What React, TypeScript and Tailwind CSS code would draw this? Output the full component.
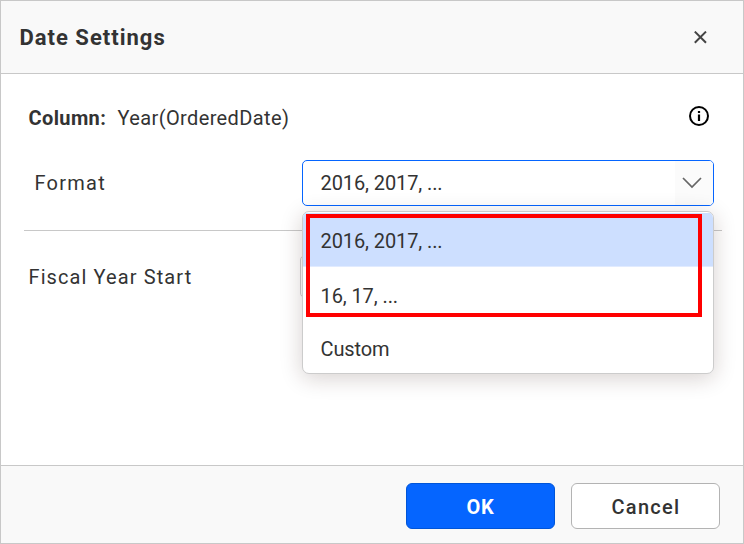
import React from "react";

const options = [
  { label: "2016, 2017, ...", style: "mt-px h-[54px] border-b border-[#e1ebff] bg-[#cddfff] pt-[2px]" },
  { label: "16, 17, ...", style: "h-[54px] pt-[4px]" },
  { label: "Custom", style: "h-[52px] pt-[4px]" },
];

export default function App() {
  return (
    <div className="flex h-[544px] w-[744px] flex-col overflow-hidden border border-[#c8c8c8] bg-white font-['Roboto',sans-serif] text-xl text-[#333]">
      <header className="flex h-[73px] shrink-0 items-center justify-between border-b border-[#c8c8c8] bg-[#f9f9f9] pr-[36px] pl-[18.5px]">
        <h1 className="pt-[2px] text-[22px] font-bold tracking-[1px]">Date Settings</h1>
        <svg width="13" height="13" viewBox="0 0 13 13" fill="none" stroke="#444" strokeWidth="2">
          <path d="M.8.6l11.2 11.2M12 .6L.8 11.8" />
        </svg>
      </header>
      <main className="flex flex-1 flex-col">
        <div className="mt-[30px] flex h-[28px] items-center pr-[34px] pl-[27.5px]">
          <b className="w-[89px] tracking-[0.38px]">Column:</b>
          <span className="tracking-[0.38px]">Year(OrderedDate)</span>
          <svg className="mb-[4px] ml-auto" width="20" height="20" viewBox="0 0 20 20" fill="none" stroke="#000" strokeWidth="2">
            <circle cx="10" cy="10" r="9" />
            <path d="M10 8.5v6.5M10 5v2" strokeWidth="2.2" />
          </svg>
        </div>
        <div className="mr-[21px] ml-[23px] mt-[28px] flex h-[71px] items-start border-b border-[#c8c8c8] pl-[10.5px]">
          <label className="mt-[9px] w-[267.5px] tracking-[1.25px]">Format</label>
          <div className="relative flex h-[46px] w-[412px] shrink-0 items-center justify-between rounded-[5px] border border-[#0565ff] pl-[17.5px]">
            <span className="tracking-[-0.1px]">2016, 2017, ...</span>
            <span className="flex h-full w-[38px] items-center rounded-r-[4px] bg-[#fbfbfb] pl-[7px]">
              <svg width="20" height="12" viewBox="0 0 20 12" fill="none" stroke="#666" strokeWidth="1.7">
                <path d="M1 1l9 9 9-9" />
              </svg>
            </span>
            <div className="absolute top-[50px] -left-px z-10 h-[163px] w-[412px] overflow-hidden rounded-[7px] border border-[#ccc] bg-white shadow-[0_4px_22px_rgba(50,20,15,0.2)]">
              {options.map((o) => (
                <div key={o.label} className={`flex items-center pl-[17.5px] tracking-[-0.1px] ${o.style}`}>
                  {o.label}
                </div>
              ))}
            </div>
            <div className="absolute top-[53px] left-[3px] z-20 h-[103px] w-[396px] border-4 border-[#ff0000]" />
          </div>
        </div>
        <div className="mt-[24px] flex h-[43px] items-center pl-[27.5px]">
          <label className="w-[271.5px] tracking-[1.1px]">Fiscal Year Start</label>
          <div className="h-[43px] w-[412px] rounded-[5px] border border-[#ccc]" />
        </div>
      </main>
      <footer className="flex h-[78px] shrink-0 items-center justify-end gap-4 border-t border-[#c8c8c8] bg-[#f9f9f9] pt-[3px] pr-[23px]">
        <button className="h-[46px] w-[149px] rounded-[6px] border border-[#0055d8] bg-[#0565ff] pt-px font-bold tracking-[0.8px] text-white">OK</button>
        <button className="h-[46px] w-[149px] rounded-[6px] border border-[#b3b3b3] bg-white pt-px pl-px font-medium tracking-[1.3px]">Cancel</button>
      </footer>
    </div>
  );
}
